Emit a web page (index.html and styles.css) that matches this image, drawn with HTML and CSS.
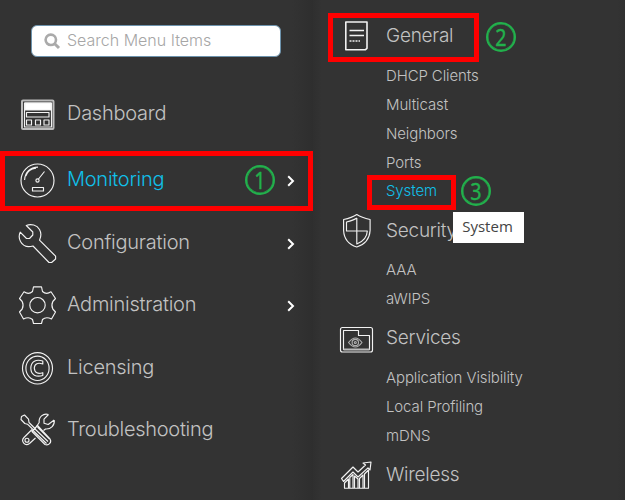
FILE: index.html
```html
<!DOCTYPE html>
<html lang="en">
<head>
<meta charset="utf-8">
<title>Monitoring menu</title>
<link rel="stylesheet" href="styles.css">
</head>
<body>
<div class="app">
  <aside class="sidebar">
    <div class="search">
      <svg width="17" height="17" viewBox="0 0 17 17"><circle cx="6.8" cy="6.8" r="5.2" fill="none" stroke="#aaa" stroke-width="2.6"/><path d="M10.7 10.7L15 15" stroke="#aaa" stroke-width="3"/></svg>
      <span>Search Menu Items</span>
    </div>
    <nav class="menu">
      <a class="row first">
        <svg class="icon" viewBox="0 0 40 40"><rect x="5" y="6.500" width="31.500" height="28.500" rx="1" class="soft"/><path d="M7.500 33V9h27v24z"/><path d="M8 9h26v7H8z" fill="#fff"/><rect x="9.500" y="18.500" width="22.500" height="4.500"/><path d="M9.500 26h5v5h-5zM18.500 26h5v5h-5zM27 26h5v5h-5z"/></svg>
        <span class="label">Dashboard</span>
      </a>
      <a class="row active">
        <svg class="icon" viewBox="0 0 40 40"><circle cx="20.500" cy="20.500" r="16.500"/><path d="M7.600 20C8 12 13 7.300 21 7.100M8.800 16C10.500 11 14 8.800 19 8.200M21.500 19L27.500 11.500"/><circle cx="20.500" cy="20.500" r="1.600"/><path d="M15.500 27.500h11v3.500h-11z"/></svg>
        <span class="label">Monitoring</span>
        <b class="badge one"><span>1</span></b>
        <svg class="chev" viewBox="0 0 8 12"><path d="M1.200 1.200L6 6l-4.800 4.800"/></svg>
      </a>
      <a class="row">
        <svg class="icon" viewBox="0 0 40 40"><path d="M9.300 2.500C14 .5 20 2 22.500 6.500C24.500 10 24 14 22.500 17.200L38.600 33.200V36L34.600 39.500H32L16 23C11 24.500 6 23 3.500 18.500C2 15.500 1.800 12 3.200 9.200L9.500 15.500H12.500L15.800 12V9z"/></svg>
        <span class="label">Configuration</span>
        <svg class="chev" viewBox="0 0 8 12"><path d="M1.200 1.200L6 6l-4.800 4.800"/></svg>
      </a>
      <a class="row">
        <svg class="icon" viewBox="0 0 40 40"><path d="M16.500 1.800H24.500L25.500 6.500C28 8.800 31.500 8.500 34 6.800L38.500 13.500L35.800 16.500C34.600 19 34.600 21.500 35.800 24L38.500 27L34.500 34C31 32.200 28 32.200 25.500 34.500L24.500 38.500H16.500L15.500 34.500C13 32.200 10 32.200 6.500 34L2.500 27L5.200 24C6.400 21.500 6.400 19 5.200 16.500L2.500 13.500L7 6.800C9.500 8.500 13 8.800 15.500 6.500z"/><circle cx="20.500" cy="20.200" r="7.700"/></svg>
        <span class="label">Administration</span>
        <svg class="chev" viewBox="0 0 8 12"><path d="M1.200 1.200L6 6l-4.800 4.800"/></svg>
      </a>
      <a class="row">
        <svg class="icon" viewBox="0 0 40 40"><ellipse cx="20.500" cy="20.300" rx="15" ry="15.700"/><ellipse cx="20.500" cy="20.300" rx="11.600" ry="12.200"/><path d="M25.800 13V16C21 14.300 17.500 15.500 17.300 20C17.500 25 21 26.200 25.800 24.700V27.500C19 29.500 14 27 13.800 20.300C14 13.500 19 10.800 25.800 13z"/></svg>
        <span class="label">Licensing</span>
      </a>
      <a class="row">
        <svg class="icon" viewBox="0 0 40 40"><path d="M4.500 6.500L7.500 5L11.500 9.200L12 12.500L18 18.500L16.500 20L10.500 14.200L7.800 13.500L4 9.500z"/><path d="M31.500 4.500C26 3 21.500 7 22.200 12.500L19.500 16.500M37.200 10C38 15 34 19.500 28.500 19L26.500 20.500M31.500 4.500L27 9.200V13.200L31.200 14.500L37.200 10"/><path d="M15 19.500L7 27.500C3.500 31 8 37 12.500 33.500L18.500 28M20.500 15.500L15 21.500L28 34.500C32 36 35 32 33 29zM18 19L31 31.500M20.500 17L32.500 29M16.500 21L29.500 33.500"/><circle cx="10" cy="30.200" r="2"/></svg>
        <span class="label wide">Troubleshooting</span>
      </a>
    </nav>
  </aside>
  <main class="panel">
    <section>
      <h2>
        <svg class="icon" viewBox="0 0 40 40"><path d="M10.800 7H32V33.300L30.200 34.800H10.800z" class="bold"/><path d="M14.500 15.500H29M14.500 20.500H29" stroke-width="1.700"/><path d="M14.500 26h10.500" stroke-width="1.700" stroke-dasharray="2 1"/></svg>
        <span>General</span>
        <i class="frame frame-general"></i><b class="badge two"><span>2</span></b>
      </h2>
      <ul>
        <li class="low">DHCP Clients</li><li class="low">Multicast</li><li class="low">Neighbors</li><li class="low">Ports</li>
        <li class="current">System<i class="frame frame-system"></i><b class="badge three"><span>3</span></b><span class="tooltip">System</span></li>
      </ul>
    </section>
    <section>
      <h2>
        <svg class="icon" viewBox="0 0 40 40"><path d="M21.800 4.500C25.600 7 30.600 8.500 35.100 9.500V20.500C34.600 28.500 29.600 34.500 21.800 37C13.600 34.500 9 28.500 8.600 20.500V9.500C13.600 8.500 18.100 7 21.800 4.500z"/><path d="M21.800 8V34C27 32 32 27.500 32.300 21H11.500V12C15.600 11 19 10 21.800 8"/></svg>
        <span>Security</span>
      </h2>
      <ul><li>AAA</li><li>aWIPS</li></ul>
    </section>
    <section>
      <h2 class="raised">
        <svg class="icon" viewBox="0 0 40 40"><rect x="5.500" y="9.500" width="32" height="24.500" rx="2"/><path d="M8.500 12.500H23.500V17.500H34.500V31.500H8.500z"/><path d="M8.500 31.500h26" class="soft"/><g opacity=".65"><path d="M13.500 24.500Q20.500 15.500 27 24.500Q20.500 33.500 13.500 24.500z"/><circle cx="20.300" cy="24.500" r="3.200"/><circle cx="20.300" cy="24.500" r="1"/></g></svg>
        <span>Services</span>
      </h2>
      <ul><li>Application Visibility</li><li>Local Profiling</li><li>mDNS</li></ul>
    </section>
    <section>
      <h2 class="raised">
        <svg class="icon" viewBox="0 0 40 40"><path d="M6.500 23.500L18 12L23 17L30.500 10L28 8L36 7L35 15L33 12.800L23 22L18 17L8.500 26.500z"/><path d="M9.500 33V28L13.500 24V33M14.800 33V22.500L18 19.500V33M19.500 33V21L23 24V33M24.500 33V23.500L28 20V33M29.500 33V19L33.500 15V33M9 33.200H34"/></svg>
        <span>Wireless</span>
      </h2>
    </section>
  </main>
</div>
</body>
</html>
```

FILE: styles.css
```css
* { box-sizing: border-box; }
body {
  margin: 0;
  background: #333;
  color: #c2c2c2;
  font-family: Inter, "Liberation Sans", sans-serif;
  font-weight: 300;
}
.app {
  display: grid;
  grid-template-columns: 313px 1fr;
  width: 625px;
  height: 500px;
  overflow: hidden;
}
.sidebar {
  padding-top: 25px;
  background: linear-gradient(90deg, #333 292px, #2e2e2e 313px);
}
.search {
  display: flex;
  align-items: center;
  gap: 6px;
  width: 250px;
  height: 32px;
  margin-left: 31px;
  padding-left: 12px;
  border: 1px solid #6d93ad;
  border-radius: 6px;
  background: #fff;
  color: #a6a6a6;
  font-size: 16px;
}
.search span { margin-top: -3px; }
.menu { padding-top: 25px; }
.row {
  display: flex;
  align-items: center;
  height: 62.5px;
  padding: 0 18px 0 17px;
}
.first { height: 69px; padding-bottom: 5px; }
.active {
  height: 60px;
  margin-bottom: 1px;
  padding: 0 13px 2px 12px;
  border: 5px solid #f00;
  color: #10c0ea;
}
.icon {
  flex: none;
  width: 40px;
  height: 40px;
  fill: none;
  stroke: #f2f2f2;
  stroke-width: 1.15;
  stroke-linejoin: round;
}
.row .icon { margin-top: -1px; }
.soft { stroke: #bbb; stroke-width: 2; }
.bold { stroke-width: 1.6; }
.label {
  margin: -3px auto 0 10px;
  font-size: 20px;
  line-height: 24px;
  letter-spacing: -0.25px;
}
.wide { letter-spacing: -0.3px; }
.chev { width: 8px; height: 12px; margin-top: 1px; fill: none; stroke: #fff; stroke-width: 2; }
.badge {
  display: flex;
  align-items: center;
  justify-content: center;
  width: 30px;
  height: 30px;
  border: 2px solid #22b14c;
  border-radius: 50%;
  box-shadow: inset 0 0 0 0.5px #22b14c;
  color: #22b14c;
  font: 400 24px/26px "Noto Sans", "Open Sans", sans-serif;
  letter-spacing: 0;
  -webkit-text-stroke: 0.4px #22b14c;
}
.badge span { margin: 0; transform: scaleX(0.82); }
.one { margin: 0 12px 0 0; }
.panel {
  padding: 10px 0 0 22px;
  background: linear-gradient(90deg, #2f2f2f, #333 9px, #333 304px, #303030);
}
h2 {
  position: relative;
  display: flex;
  align-items: center;
  height: 50px;
  margin: 0;
  font-size: 19px;
  font-weight: 300;
  letter-spacing: -0.25px;
}
h2 > span { margin-left: 11px; }
.raised > span { margin-top: -2px; }
ul { margin: 0; padding: 0; list-style: none; }
li {
  position: relative;
  height: 29px;
  padding-left: 51px;
  font-size: 15px;
  line-height: 30px;
  letter-spacing: -0.12px;
}
.low { line-height: 32px; }
.current { color: #10c0ea; }
.frame { position: absolute; border: 5px solid #f00; }
.frame-general { left: -7px; top: 3px; width: 151px; height: 49px; }
.frame-system { left: 32px; top: -1px; width: 89px; height: 35px; }
.two { position: absolute; left: 151px; top: 12px; }
.three { position: absolute; left: 126px; top: 0; }
.tooltip {
  position: absolute;
  z-index: 2;
  left: 118px;
  top: 36px;
  width: 71px;
  height: 31px;
  padding-right: 2px;
  background: #fff;
  color: #444;
  font: 400 15px/29px "Open Sans", sans-serif;
  letter-spacing: 0;
  text-align: center;
}
```
